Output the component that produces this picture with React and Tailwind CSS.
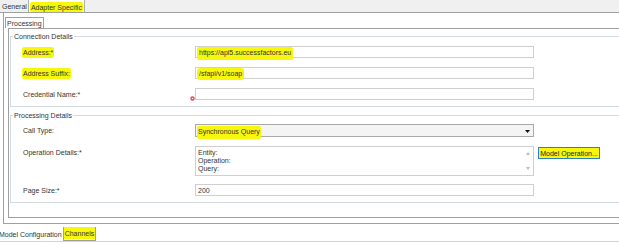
const Y = "bg-[#f7f70c]";

function Row({ label, hl, children, className = "" }) {
  return (
    <div className={`flex pl-[12px] ${className}`}>
      <div className="w-[172px] shrink-0 flex items-center">
        {hl ? (
          <span className={`${Y} -ml-[1px] px-[1px] py-[1px] rounded-[2px]`}>{label}</span>
        ) : (
          <span>{label}</span>
        )}
      </div>
      {children}
    </div>
  );
}

function Group({ title, className = "", children }) {
  return (
    <div className={`relative border border-[#d3dae1] ${className}`}>
      <span className="absolute left-[2px] -top-[5px] bg-white px-[1px] leading-[9px]">{title}</span>
      {children}
    </div>
  );
}

function Input({ children, className = "" }) {
  return (
    <div className={`relative w-[339px] h-full border border-[#cfcfcf] bg-white flex items-center pl-[2px] ${className}`}>
      {children}
    </div>
  );
}

export default function App() {
  return (
    <div className="w-[619px] h-[243px] overflow-hidden bg-white flex flex-col font-['Liberation_Sans',Arial,sans-serif] text-[7px] leading-[9px] text-[#333]">
      {/* top tabs */}
      <div className="h-[13px] shrink-0 bg-[#f0f0f0] border-b border-[#a0a0a0] flex items-stretch">
        <div className="pl-[2px] pr-[1px] border-r border-[#b0b0b0] flex items-center">General</div>
        <div className="pl-[1px] pr-[1px] pt-[2px] border-r border-[#b0b0b0] bg-white flex items-stretch">
          <span className={`${Y} px-[1px] flex items-center rounded-[2px]`}>Adapter Specific</span>
        </div>
      </div>

      {/* outer panel */}
      <div className="h-[211px] shrink-0 ml-[3px] border-l border-b border-[#a0a0a0] flex flex-col pt-[4px]">
        <div className="h-[11px] shrink-0 flex">
          <div className="ml-[1px] border-t border-l border-r border-[#a0a0a0] px-[1px] flex items-center">Processing</div>
        </div>
        <div className="ml-[4px] -mr-[40px] h-[190px] shrink-0 border-t border-l border-b border-[#a0a0a0] pl-[1px] pt-[7px] flex flex-col">
          <Group title="Connection Details" className="h-[71px] shrink-0 pt-[9px] flex flex-col gap-[9px]">
            <Row label="Address:*" hl className="h-[12px]">
              <Input>
                <span className={`${Y} -ml-[1px] px-[2px] pt-[1px] pb-[3px] mt-[3px] rounded-[2px]`}>https://api5.successfactors.eu</span>
              </Input>
            </Row>
            <Row label="Address Suffix:" hl className="h-[12px]">
              <Input>
                <span className={`${Y} -ml-[1px] px-[2px] pt-[1px] pb-[2px] mt-[2px] rounded-[3px]`}>/sfapi/v1/soap</span>
              </Input>
            </Row>
            <Row label="Credential Name:*" className="h-[12px]">
              <Input>
                <svg className="absolute -left-[6px] top-[7px]" width="5" height="5" viewBox="0 0 5 5">
                  <circle cx="2.5" cy="2.5" r="2.2" fill="#e0495a" />
                  <circle cx="2.5" cy="2.5" r="0.8" fill="#fff" />
                </svg>
              </Input>
            </Row>
          </Group>

          <Group title="Processing Details" className="mt-[8px] h-[88px] shrink-0 pt-[8px] flex flex-col">
            <Row label="Call Type:" className="h-[13px]">
              <div className="relative w-[339px] h-full border border-[#a9a9a9] bg-[#f4f4f4] flex items-center pl-[1px]">
                <span className={`${Y} px-[1px] pt-[1px] pb-[3px] mt-[3px] rounded-[2px]`}>Synchronous Query</span>
                <svg className="absolute right-[3px] top-[5px]" width="5" height="3" viewBox="0 0 5 3">
                  <path d="M0 0 L5 0 L2.5 3 Z" fill="#111" />
                </svg>
              </div>
            </Row>
            <div className="mt-[9px] flex pl-[12px] h-[30px]">
              <div className="w-[172px] shrink-0 pt-[2px]">Operation Details:*</div>
              <div className="w-[339px] h-full border border-[#cfcfcf] bg-white flex">
                <div className="flex-1 pl-[2px] pt-[2px] leading-[8px] flex flex-col">
                  <span>Entity:</span>
                  <span>Operation:</span>
                  <span>Query:</span>
                </div>
                <div className="w-[10px] flex flex-col items-center justify-between py-[5px]">
                  <svg width="4" height="3" viewBox="0 0 4 3"><path d="M0 3 L4 3 L2 0 Z" fill="#bdbdbd" /></svg>
                  <svg width="4" height="3" viewBox="0 0 4 3"><path d="M0 0 L4 0 L2 3 Z" fill="#bdbdbd" /></svg>
                </div>
              </div>
              <div className={`ml-[4px] mt-[1px] h-[12px] w-[62px] border border-[#2f7fc8] ${Y} flex items-center justify-center text-[#222]`}>
                Model Operation...
              </div>
            </div>
            <Row label="Page Size:*" className="mt-[8px] h-[12px]">
              <Input>200</Input>
            </Row>
          </Group>
        </div>
      </div>

      {/* bottom tabs */}
      <div className="h-[18px] shrink-0 border-b border-[#c9d5df] flex items-start pt-[3px]">
        <div className="h-[14px] flex items-center pr-[1px] -ml-[1px]">Model Configuration</div>
        <div className="h-[14px] border-l border-r border-b border-[#a0a0a0] flex items-stretch pb-[1px]">
          <span className={`${Y} px-[1px] flex items-center`}>Channels</span>
        </div>
      </div>
    </div>
  );
}
